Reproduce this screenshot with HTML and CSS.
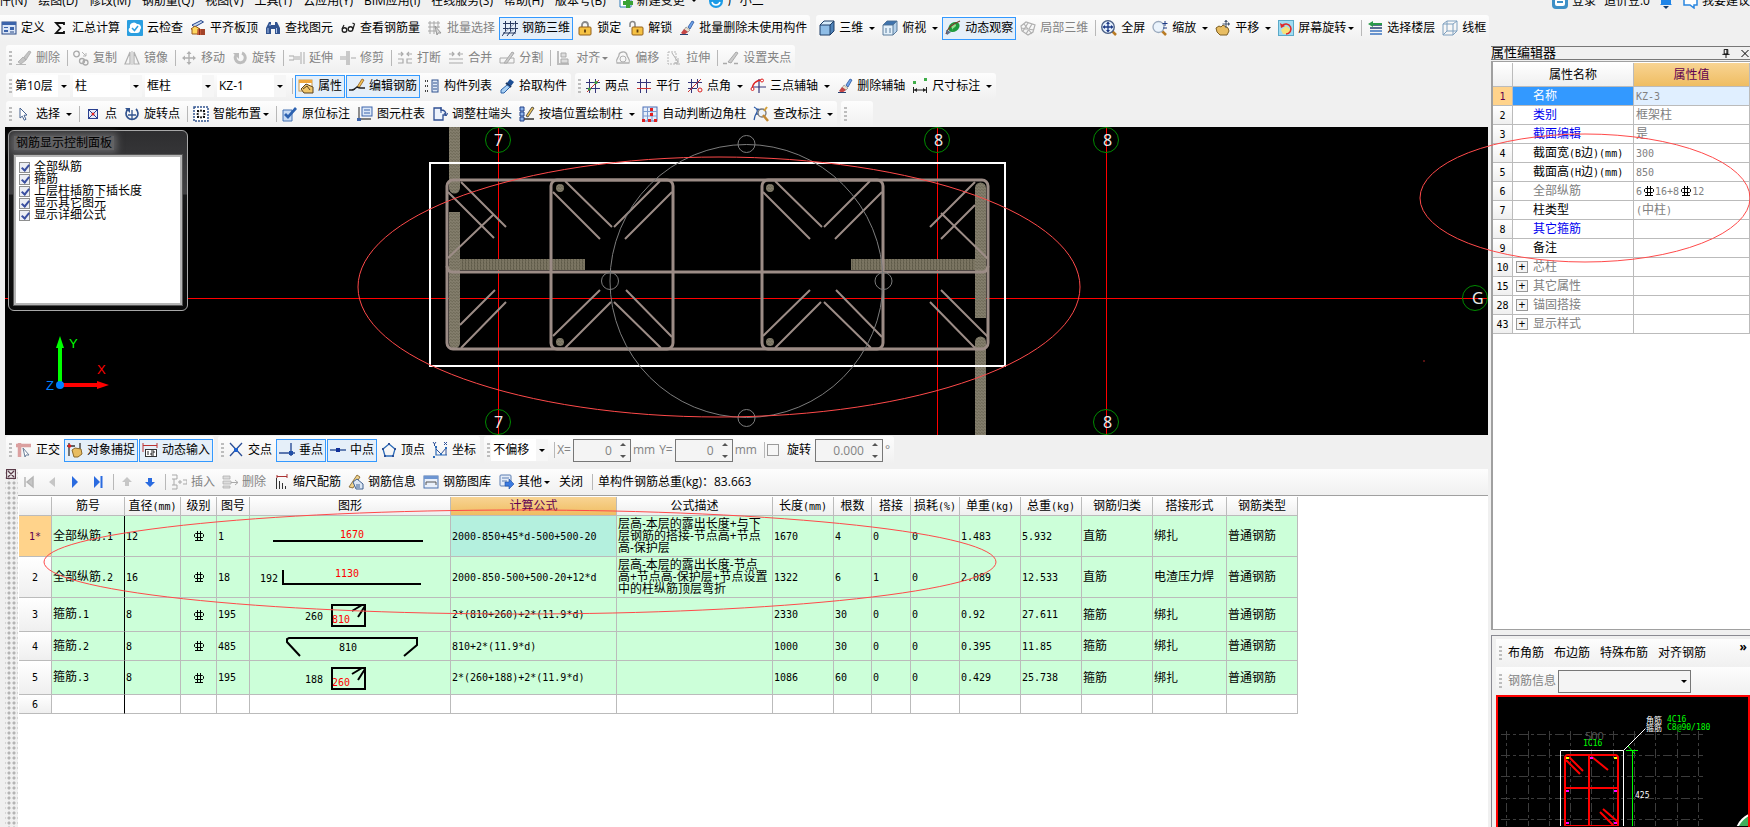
FILE: index.html
```html
<!DOCTYPE html>
<html lang="zh-CN">
<head>
  <meta charset="UTF-8">
  <meta name="viewport" content="width=device-width, initial-scale=1.0">
  <title>钢筋三维</title>
  <link rel="stylesheet" href="styles.css">
</head>
<body>
  <!-- icon sprite -->
  <svg class="sprite" aria-hidden="true">
    <symbol id="i-define" viewBox="0 0 16 16"><rect x="1" y="2" width="14" height="12" fill="#dbe6f7" stroke="#2a4a86"/><path d="M1 3.500h14" stroke="#3c64ab" stroke-width="3"/><path d="M3 7h4v1H3zM9 7h4v3H9zM3 10h4v2H3z" fill="#3c64ab"/><path d="M9 12h4" stroke="#2a4a86"/></symbol>
    <symbol id="i-sigma" viewBox="0 0 16 16"><path d="M12 5V3H4l4.500 5L4 13h8v-2" fill="none" stroke="#111" stroke-width="1.800"/></symbol>
    <symbol id="i-cloud" viewBox="0 0 16 16"><rect width="16" height="16" rx="1" fill="#2b9fe0"/><path d="M4 13a3 3 0 0 1-1-5.500A4 4 0 0 1 10 4a3.500 3.500 0 0 1 3 6 3 3 0 0 1-3 3z" fill="#fff"/><path d="M5 8l2.500 2.500L11 6" fill="none" stroke="#2b9fe0" stroke-width="1.500"/></symbol>
    <symbol id="i-board" viewBox="0 0 16 16"><path d="M2 5l9-4.500 2.500 1.500-9 5z" fill="#c8d8f0" stroke="#23438a"/><path d="M1 9l4-3 5 3-2 0v5H2V9z" fill="#ffd75e" stroke="#96591c"/><path d="M8 9h7v6H7z" fill="#c65a3a"/><path d="M9.500 9v6M12 9v6M14 9v6" stroke="#7f2d18"/></symbol>
    <symbol id="i-binoc" viewBox="0 0 16 16"><path d="M4 2h2v3h4V2h2l3 6v6h-5v-5H6v5H1V8z" fill="#31538f"/><path d="M3 8v5M11.500 8v5M5 4v2" stroke="#a9c2ea"/></symbol>
    <symbol id="i-glasses" viewBox="0 0 16 16"><circle cx="4.500" cy="10" r="2.300" fill="#fff" stroke="#222" stroke-width="1.400"/><circle cx="10.500" cy="9" r="2.300" fill="#fff" stroke="#222" stroke-width="1.400"/><path d="M13 9l1.500-5-2-1M2 9l2-4" fill="none" stroke="#222" stroke-width="1.200"/></symbol>
    <symbol id="i-grid" viewBox="0 0 16 16"><path d="M1 3h12M1 7h12M1 11h8M3 1v13M7 1v13M11 1v7" stroke="#a7a7a7"/><path d="M8 6l6 7-3 0-1 2z" fill="#d8d8d8" stroke="#999"/></symbol>
    <symbol id="i-grid3d" viewBox="0 0 16 16"><path d="M3.500 1v11M8.500 1v11M13.500 1v11M1 3.500h15M1 8.500h15M3 12L0 16M8 12l-3 4M13 12l-3 4M1 13h13" fill="none" stroke="#26385f"/><path d="M3 12L13 3M8 12l6-5" stroke="#6b7f9f" stroke-width=".8"/></symbol>
    <symbol id="i-lock" viewBox="0 0 16 16"><path d="M5 8V5a3 3 0 0 1 6 0v3" fill="none" stroke="#8a8a8a" stroke-width="1.800"/><rect x="2" y="7" width="12" height="8" rx="1" fill="#f6c244" stroke="#94611a"/><path d="M8 9.500v3" stroke="#5d3b0c" stroke-width="1.800"/></symbol>
    <symbol id="i-unlock" viewBox="0 0 16 16"><path d="M2 7V4a2.500 2.500 0 0 1 5 0v4" fill="none" stroke="#8a8a8a" stroke-width="1.600"/><rect x="4" y="7" width="11" height="8" rx="1" fill="#f6c244" stroke="#94611a"/><path d="M9.500 9.500v3" stroke="#5d3b0c" stroke-width="1.800"/></symbol>
    <symbol id="i-brush" viewBox="0 0 16 16"><path d="M9 7l4-6 2 1-4 7z" fill="#6fa3e8" stroke="#2d57a0" stroke-width=".8"/><path d="M7 7l4 3-2 2-4-2z" fill="#e9e2d0" stroke="#777" stroke-width=".6"/><path d="M5 9l4 3-4 3-3-2z" fill="#c44545"/><path d="M1 14.500h8" stroke="#28406f"/></symbol>
    <symbol id="i-cube" viewBox="0 0 16 16"><path d="M1 5l4-4h10l-4 4z" fill="#d7ecfb"/><path d="M1 5h10v10H1z" fill="#8fbde6"/><path d="M11 5l4-4v10l-4 4z" fill="#4e82b8"/><path d="M1 5h10v10H1zM1 5l4-4h10v10l-4 4M11 5l4-4" fill="none" stroke="#1f3f68"/></symbol>
    <symbol id="i-cubetop" viewBox="0 0 16 16"><path d="M1 5l4-4h10l-4 4z" fill="#3f73ad"/><path d="M1 5h10v10H1z" fill="#e3f0fa"/><path d="M11 5l4-4v10l-4 4z" fill="#b7d2ea"/><path d="M1 5h10v10H1zM1 5l4-4h10v10l-4 4M11 5l4-4M4 8v5M8 8v5" fill="none" stroke="#4d7093" stroke-width=".9"/></symbol>
    <symbol id="i-orbit" viewBox="0 0 16 16"><ellipse cx="9" cy="7" rx="6" ry="4.500" transform="rotate(-35 9 7)" fill="#1f9a3c"/><path d="M6 6c3-4 7-1 4 1s-3 3-2 4" fill="#8fe08d"/><path d="M1 14C3 7 8 4 15 1" fill="none" stroke="#7a3a2a" stroke-width="1.200"/><path d="M1 10l1 5 4-3" fill="#5b6f8a"/></symbol>
    <symbol id="i-local3d" viewBox="0 0 16 16"><path d="M1 6l5-4 9 3-2 7-5 3-6-4zM4 4l8 10M8 3l-5 8M12 4l-6 10M1 8l13 2" fill="none" stroke="#b0b0b0" stroke-width="1.200"/></symbol>
    <symbol id="i-zoomfit" viewBox="0 0 16 16"><path d="M11 11l4 4" stroke="#b97a22" stroke-width="2.500"/><circle cx="7" cy="7" r="6.300" fill="#e3eefb" stroke="#4a5f86" stroke-width="1.300"/><path d="M7 2.500v9M2.500 7h9" stroke="#1d3a86" stroke-width="1.300"/><path d="M7 1.500l2 2.500H5zM7 12.500l2-2.500H5zM1.500 7L4 5v4zM12.500 7L10 5v4z" fill="#1d3a86"/></symbol>
    <symbol id="i-zoom" viewBox="0 0 16 16"><path d="M10 11l4 4" stroke="#b97a22" stroke-width="2.500"/><circle cx="6.500" cy="7" r="5.500" fill="#eaf3fc" stroke="#9aa9bd" stroke-width="1.300"/><path d="M13 1v5M10.500 3.500h5M11 8h4" stroke="#1d3a86"/></symbol>
    <symbol id="i-pan" viewBox="0 0 16 16"><path d="M1 8l3-2 2 1 2-2 5 3 1 3-2 4H5l-3-3z" fill="#e8bd62" stroke="#7d5f24"/><path d="M11 0v8M7.500 4h7" stroke="#44556e"/><path d="M11 0l2 2H9zM15 4l-2-2v4z" fill="#44556e"/></symbol>
    <symbol id="i-rotscreen" viewBox="0 0 16 16"><rect x=".500" y=".500" width="15" height="15" fill="#9fdcf3" stroke="#5aa9c8"/><path d="M3 10l5-4 5 4-3 4H5z" fill="#f6e27a"/><path d="M4 6a5 5 0 1 1 4 8" fill="none" stroke="#e02828" stroke-width="1.600"/><path d="M2 3l1 5 4-2z" fill="#e02828"/></symbol>
    <symbol id="i-floors" viewBox="0 0 16 16"><path d="M5 5h10M3 8h12" stroke="#27406f" stroke-width="1.500"/><path d="M3 11h12M3 14h12" stroke="#3c74c0" stroke-width="1.500"/><path d="M1 4l5-3v2h9v2H6v2z" fill="#2b9a4a"/></symbol>
    <symbol id="i-wire" viewBox="0 0 16 16"><path d="M1 4h10v11H1zM1 4l4-3h10v10l-4 4M11 4l4-3M5 1v10h10M1 15l4-4" fill="none" stroke="#7fa0bf"/></symbol>

    <symbol id="i-gbrush" viewBox="0 0 16 16"><path d="M8 7l5-6 2 1-5 8zM7 7l3 3-5 4-3-2zM0 14.500h10" fill="#c4c4c4" stroke="#aaa" stroke-width=".8"/></symbol>
    <symbol id="i-copy" viewBox="0 0 16 16"><circle cx="3.500" cy="4" r="2.800" fill="none" stroke="#aaa" stroke-width="1.300"/><circle cx="9" cy="11" r="2.500" fill="none" stroke="#aaa" stroke-width="1.300"/><circle cx="12.500" cy="12.500" r="2.500" fill="none" stroke="#aaa" stroke-width="1.300"/><path d="M9 2l4 4M13 3v3h-3" fill="none" stroke="#b5b5b5"/></symbol>
    <symbol id="i-mirror" viewBox="0 0 16 16"><path d="M6 2v12H1zM10 2v12h5z" fill="none" stroke="#b0b0b0" stroke-width="1.200"/><path d="M8 1v14" stroke="#bbb"/></symbol>
    <symbol id="i-move" viewBox="0 0 16 16"><path d="M8 2v12M2 8h12" stroke="#b0b0b0" stroke-width="1.400"/><path d="M8 1l2.500 3h-5zM8 15l2.500-3h-5zM1 8l3-2.500v5zM15 8l-3-2.500v5z" fill="#b0b0b0"/></symbol>
    <symbol id="i-rotate" viewBox="0 0 16 16"><path d="M10 3a5 5 0 1 1-6 2" fill="none" stroke="#bdbdbd" stroke-width="3"/><path d="M1 3h6v6z" fill="#bdbdbd"/></symbol>
    <symbol id="i-extend" viewBox="0 0 16 16"><path d="M0 6h5v4H0M6 7h5M6 9h5M12 2v12M15 2v12" fill="none" stroke="#aaa"/></symbol>
    <symbol id="i-trim" viewBox="0 0 16 16"><path d="M0 7h6M0 9h6M7 1v14M9 1v14M11 8h5" fill="none" stroke="#aaa" stroke-width="1.200"/></symbol>
    <symbol id="i-break" viewBox="0 0 16 16"><path d="M1 4h5M10 4h5M4 2l2 2-2 2M12 2l-2 2 2 2M1 9h5v4H1M15 9h-5v4h5" fill="none" stroke="#aaa" stroke-width="1.200"/></symbol>
    <symbol id="i-merge" viewBox="0 0 16 16"><path d="M1 4h5M10 4h5M4 2l2 2-2 2M12 2l-2 2 2 2M1 9h14M1 13h14" fill="none" stroke="#aaa" stroke-width="1.200"/></symbol>
    <symbol id="i-split" viewBox="0 0 16 16"><path d="M1 8h14v5H1z" fill="none" stroke="#aaa"/><path d="M5 13l8-11 2 1-7 10z" fill="#ccc" stroke="#aaa"/></symbol>
    <symbol id="i-align" viewBox="0 0 16 16"><path d="M2 1v14M3 14h10" stroke="#aaa" stroke-width="1.500"/><path d="M5 3h5v4H5zM5 9h7v4H5z" fill="#ddd" stroke="#aaa"/></symbol>
    <symbol id="i-offset" viewBox="0 0 16 16"><path d="M2 13c-2-4 2-5 2-8s7-5 8 0c0 3 4 4 2 8z" fill="none" stroke="#b0b0b0" stroke-width="1.300"/><circle cx="8" cy="9" r="3" fill="none" stroke="#b0b0b0"/></symbol>
    <symbol id="i-stretch" viewBox="0 0 16 16"><path d="M2 2h8v12H2z" fill="none" stroke="#b5b5b5" stroke-dasharray="2 1"/><path d="M6 3l6 9M12 8v5H8M10 14h4" fill="none" stroke="#b0b0b0"/></symbol>
    <symbol id="i-gripset" viewBox="0 0 16 16"><path d="M0 13.500h4M11 13.500h4" stroke="#aaa" stroke-width="1.500"/><path d="M5 12l8-10 2 1-7 10z" fill="#ccc" stroke="#aaa"/></symbol>

    <symbol id="i-prop" viewBox="0 0 16 16"><rect x="1" y="2" width="13" height="11" fill="#fff" stroke="#c99a4c"/><path d="M1 3.500h13" stroke="#f0a73a" stroke-width="3"/><path d="M3 11l5-5 7 3v6H6z" fill="#f0c66b" stroke="#5b4320"/><path d="M5 11l4-3 3 4" fill="none" stroke="#5b4320"/></symbol>
    <symbol id="i-editbar" viewBox="0 0 16 16"><path d="M8 9l5-8 2 1-5 8z" fill="#f5c556" stroke="#8d5a20" stroke-width=".8"/><path d="M0 12h4l4-3 3 1h5M3 12l3-1" fill="none" stroke="#222" stroke-width="1.400"/></symbol>
    <symbol id="i-list" viewBox="0 0 16 16"><path d="M1 3h4M1 8h4M1 13h4" stroke="#444" stroke-width="2" stroke-dasharray="1 1"/><rect x="8" y="2" width="6" height="12" fill="#dfe9f7" stroke="#31538f"/><path d="M9 5h4M9 8h4M9 11h4" stroke="#31538f"/></symbol>
    <symbol id="i-pick" viewBox="0 0 16 16"><path d="M8 5l3-4 4 3-3 4z" fill="#1c4e95"/><path d="M7 5l5 4" stroke="#16335f" stroke-width="2"/><path d="M8 7l3 2-6 6-3 0 0-3z" fill="#a8d0f4" stroke="#2c62a8"/></symbol>
    <symbol id="i-twopt" viewBox="0 0 16 16"><path d="M4.500 1v14M10.500 1v14M1 4.500h14M1 10.500h14" stroke="#35357a"/><path d="M2 14L14 2" stroke="#c33"/><circle cx="4.500" cy="11" r="1.600" fill="#3a9b3a"/><circle cx="11" cy="4.500" r="1.600" fill="#3a9b3a"/></symbol>
    <symbol id="i-parallel" viewBox="0 0 16 16"><path d="M4.500 1v14M10.500 1v14M1 4.500h14" stroke="#35357a"/><path d="M1 10.500h14" stroke="#c33"/></symbol>
    <symbol id="i-angle" viewBox="0 0 16 16"><path d="M4.500 1v14M10.500 1v9M1 4.500h14M1 10.500h9" stroke="#35357a"/><path d="M1 14L14 1" stroke="#c33"/><circle cx="13" cy="12" r="2" fill="none" stroke="#d22"/></symbol>
    <symbol id="i-threept" viewBox="0 0 16 16"><path d="M9 1v14M3 9h13" stroke="#35357a" stroke-width="1.200"/><path d="M2 12c0-6 4-10 10-10" fill="none" stroke="#d22" stroke-width="1.300"/><circle cx="2.500" cy="11" r="1.500" fill="#fff" stroke="#d22"/><circle cx="12" cy="2.500" r="1.500" fill="#fff" stroke="#d22"/></symbol>
    <symbol id="i-dim" viewBox="0 0 16 16"><path d="M1 3h3v3H1zM12 0h3v3h-3z" fill="#3fae49"/><path d="M1.500 9v6M14.500 9v6M2 12h12" stroke="#222"/><path d="M2 12l3-2v4zM14 12l-3-2v4z" fill="#222"/></symbol>

    <symbol id="i-select" viewBox="0 0 16 16"><path d="M4 2l7 7-3 .300 2 4-1.700.900-2-4L4 12z" fill="#fff" stroke="#44618f"/></symbol>
    <symbol id="i-point" viewBox="0 0 16 16"><rect x="3.500" y="3.500" width="9" height="9" fill="#e6ecf8" stroke="#2a3f8f"/><path d="M4 4l8 8M12 4l-8 8" stroke="#2a3f8f"/><circle cx="8" cy="8" r="1.500" fill="#d22"/></symbol>
    <symbol id="i-rotpt" viewBox="0 0 16 16"><path d="M4 3a6 6 0 1 0 8 0" fill="none" stroke="#31538f" stroke-width="1.700"/><path d="M1 2h5v5z" fill="#31538f"/><path d="M8 4v9M4 9h8" stroke="#31538f" stroke-width="1.300"/></symbol>
    <symbol id="i-smart" viewBox="0 0 16 16"><rect x="1" y="1" width="14" height="14" fill="#fff" stroke="#31538f" stroke-width="1.500" stroke-dasharray="2 1"/><path d="M8 3l1.500 2.500h-3zM8 13l1.500-2.500h-3zM3 8l2.500-1.500v3zM13 8l-2.500-1.500v3zM4 4h2v2H4zM10 4h2v2h-2zM4 10h2v2H4zM10 10h2v2h-2z" fill="#111"/></symbol>
    <symbol id="i-origin" viewBox="0 0 16 16"><path d="M1 4h9v11H1z" fill="#c7dbf5" stroke="#4370b3"/><path d="M2 9l4 4L15 3l-2-2-7 8-2-2z" fill="#2d62b0"/></symbol>
    <symbol id="i-coltable" viewBox="0 0 16 16"><path d="M2 1v12h12" fill="none" stroke="#555" stroke-width="1.300"/><rect x="5" y="1" width="10" height="9" fill="#dce8f8" stroke="#3c64ab"/><path d="M7 4h6M7 7h6" stroke="#3c64ab"/><path d="M0 12h4v3H0z" fill="#3c64ab"/></symbol>
    <symbol id="i-adjust" viewBox="0 0 16 16"><path d="M2 2h7v2c4 0 5 2 5 5h-3v5H2z" fill="#edf3fc" stroke="#2f4f93" stroke-width="1.300"/><path d="M9 1v6M12 7l2 3 2-3" fill="none" stroke="#2f4f93"/></symbol>
    <symbol id="i-wall" viewBox="0 0 16 16"><path d="M1 1h4v4H1zM1 6h4v4H1zM1 11h4v4H1z" fill="#8fb4ea" stroke="#23438a"/><path d="M5 13h10" stroke="#333" stroke-width="1.500"/><path d="M7 10l6-9 2 1-6 9z" fill="#f3c75b" stroke="#333" stroke-width=".8"/></symbol>
    <symbol id="i-auto" viewBox="0 0 16 16"><rect x="1" y="1" width="14" height="14" fill="#e8effa" stroke="#4a6fb5"/><path d="M1 5.500h14M1 10h14M5.500 1v14M10 1v14" stroke="#7c9bd0"/><path d="M8 2h3v3H8zM8 7h3v3H8zM0 13h3v3H0zM6 13h3v3H6zM12 13h3v3h-3z" fill="#e01f1f"/></symbol>
    <symbol id="i-query" viewBox="0 0 16 16"><path d="M1 1c4 2 4 4 2 7s-1 4-2 6M3 3l6 1M3 8h3" fill="none" stroke="#2c5aa5" stroke-width="1.300"/><circle cx="9" cy="7" r="4" fill="#eef4fb" stroke="#777" stroke-width="1.300"/><path d="M10 9l5 6" stroke="#c38a35" stroke-width="2.500"/><path d="M11 5l3-4" stroke="#d4a13b" stroke-width="2"/></symbol>

    <symbol id="i-ortho" viewBox="0 0 16 16"><path d="M0 3.500h15M3.500 1v14" stroke="#dba0a0" stroke-width="3.500"/><path d="M7 6l6 7-3 0-1 2z" fill="#fff" stroke="#6b7f99"/></symbol>
    <symbol id="i-osnap" viewBox="0 0 16 16"><path d="M2 1v13M0 4h8M13 1v6" stroke="#333" stroke-width="1.300"/><circle cx="2.500" cy="4" r="1.800" fill="#d22"/><path d="M5 8l3-2 6 1 1 5-4 3H7z" fill="#e8bd62" stroke="#8b6a2c"/></symbol>
    <symbol id="i-dyn" viewBox="0 0 16 16"><path d="M1 1v9M15 1v5M1 3.500h14" stroke="#b33" fill="none"/><rect x="3.500" y="7.500" width="11" height="7" fill="#fff" stroke="#333"/><path d="M6 9v4M9 9h3v2H9v2h3" fill="none" stroke="#222"/></symbol>
    <symbol id="i-cross" viewBox="0 0 16 16"><path d="M2 1l12 13M14 1L2 14" stroke="#2c4f96" stroke-width="1.300"/><rect x="6" y="6" width="4" height="4" fill="#1f62d0"/></symbol>
    <symbol id="i-perp" viewBox="0 0 16 16"><path d="M0 11h16M12 1v13" stroke="#2c4f96" stroke-width="1.400"/><rect x="10" y="9" width="4" height="4" fill="#1f4fa8"/></symbol>
    <symbol id="i-mid" viewBox="0 0 16 16"><path d="M0 8h16" stroke="#2c4f96" stroke-width="1.400"/><rect x="6" y="6" width="4" height="4" fill="#12309a"/></symbol>
    <symbol id="i-vertex" viewBox="0 0 16 16"><path d="M8 2l6 5-2 7H4L2 7z" fill="none" stroke="#2c6bb8" stroke-width="1.300"/><path d="M7 1h2v2H7zM1 6h2v2H1zM13 6h2v2h-2zM3 13h2v2H3zM11 13h2v2h-2z" fill="#2c4f96"/></symbol>
    <symbol id="i-coord" viewBox="0 0 16 16"><path d="M4 5v8h11" fill="none" stroke="#2c6bb8" stroke-width="1.200"/><path d="M1 0l1.500 2L4 0M2.500 2v2M12 0l3 3M15 0l-3 3M4 7l5 5 5-6v7" fill="none" stroke="#2c4f96"/><path d="M3 4h2v2H3zM8 11h2v2H8zM13 5h2v2h-2zM1 14h2v2H1z" fill="#2c6bb8"/></symbol>

    <symbol id="i-first" viewBox="0 0 16 16"><path d="M4 3v10M6 8l6-5v10z" fill="#c6c6c6" stroke="#b5b5b5" stroke-width="1.500"/></symbol>
    <symbol id="i-prev" viewBox="0 0 16 16"><path d="M5 8l6-5v10z" fill="#c6c6c6"/></symbol>
    <symbol id="i-next" viewBox="0 0 16 16"><path d="M5 2l6 6-6 6z" fill="#2a6be0"/></symbol>
    <symbol id="i-last" viewBox="0 0 16 16"><path d="M4 2l6 6-6 6z" fill="#2a6be0"/><path d="M11.500 2v12" stroke="#2a6be0" stroke-width="2"/></symbol>
    <symbol id="i-up" viewBox="0 0 16 16"><path d="M8 3l5 5h-3v4H6V8H3z" fill="#c6c6c6"/></symbol>
    <symbol id="i-down" viewBox="0 0 16 16"><path d="M8 13l5-5h-3V4H6v4H3z" fill="#2a6be0"/></symbol>
    <symbol id="i-insert" viewBox="0 0 16 16"><path d="M1 1h5v4H1M1 11h5v4H1M3 5v6M7 8h4M9 6v4M12 6h4v4h-4" fill="none" stroke="#a9a9a9"/></symbol>
    <symbol id="i-delrow" viewBox="0 0 16 16"><path d="M1 2h7v3H1zM1 7h8v3H1zM1 12h7v2H1z" fill="#ddd" stroke="#b0b0b0" stroke-width=".8"/><path d="M9 8.500h7M13 6l3 2.500-3 2.500" fill="none" stroke="#a9a9a9"/></symbol>
    <symbol id="i-scale" viewBox="0 0 16 16"><path d="M4 1v3M14 0v4M4 2.500h10" stroke="#a33"/><path d="M3.500 4v11M6.500 7v8M9.500 9v6M12.500 12v3" stroke="#333"/></symbol>
    <symbol id="i-info" viewBox="0 0 16 16"><path d="M1 13L9 1l3 2-7 11z" fill="#f0d28a" stroke="#7a5b24" stroke-width=".8"/><path d="M5 8l4-3 6 5v5H8z" fill="#dce7f5" stroke="#3f618f"/><path d="M9 10v4M11 10v4" stroke="#3f618f"/></symbol>
    <symbol id="i-lib" viewBox="0 0 16 16"><rect x="1" y="2" width="14" height="12" fill="#e9f0fa" stroke="#4b73ae"/><path d="M1 3.500h14" stroke="#6d95d1" stroke-width="3"/><path d="M3 11V8h10v3" fill="none" stroke="#555"/></symbol>
    <symbol id="i-other" viewBox="0 0 16 16"><rect x="2" y="1" width="11" height="11" rx="1" fill="#e4ecf8" stroke="#5c7fb2"/><path d="M4 4h7M4 7h5" stroke="#5c7fb2"/><path d="M7 8h4V5l5 5-5 5v-3H7z" fill="#3b7ae0" stroke="#1d4da0" stroke-width=".6"/></symbol>

    <symbol id="i-new" viewBox="0 0 16 16"><path d="M3 1h8l3 3v10H3z" fill="#fff" stroke="#2f7bb8"/><path d="M11 5v10M6 10h10" stroke="#3aa335" stroke-width="4"/></symbol>
    <symbol id="i-face" viewBox="0 0 16 16"><circle cx="8" cy="8" r="7" fill="#1c9be6"/><path d="M4 9c1 4 7 4 8 0" fill="none" stroke="#fff" stroke-width="1.500"/></symbol>
    <symbol id="i-user" viewBox="0 0 16 16"><rect width="16" height="16" rx="4" fill="#3d8fc6"/><rect x="3" y="6" width="10" height="7" rx="2" fill="#fff"/><path d="M5 9h6" stroke="#3d8fc6" stroke-width="2"/></symbol>
    <symbol id="i-bell" viewBox="0 0 16 16"><path d="M3 11V6a5 5 0 0 1 10 0v5l1 1H2z" fill="#1e84e8"/><path d="M5 13h6l-3 3z" fill="#123a6b"/></symbol>
    <symbol id="i-chat" viewBox="0 0 16 16"><path d="M2 2h13v10h-3v3l-4-3H2z" fill="#fff" stroke="#2a86e0" stroke-width="1.500"/></symbol>
    <!-- HRB grade mark -->
    <symbol id="i-grade" viewBox="0 0 10 10"><path d="M.500 3.500l1-1h7l1 1v2l-1 1h-7l-1-1zM3.500 0v9M6.500 0v9M1 9.500h8" fill="none" stroke="currentColor"/></symbol>
  </svg>

  <header>
    <nav class="menubar">
      <a href="#">文件(N)</a><a href="#">绘图(D)</a><a href="#">修改(M)</a><a href="#">钢筋量(Q)</a><a href="#">视图(V)</a><a href="#">工具(T)</a><a href="#">云应用(Y)</a><a href="#">BIM应用(I)</a><a href="#">在线服务(S)</a><a href="#">帮助(H)</a><a href="#">版本号(B)</a>
      <a href="#"><svg><use href="#i-new"/></svg>新建变更<i class="arrow"></i></a>
      <a href="#"><svg><use href="#i-face"/></svg>广小二</a>
      <div class="account">
        <a href="#"><svg><use href="#i-user"/></svg>登录</a>
        <a href="#">造价豆:0</a>
        <a href="#" aria-label="通知"><svg><use href="#i-bell"/></svg></a>
        <a href="#"><svg><use href="#i-chat"/></svg>我要建议</a>
      </div>
    </nav>
    <div class="row row-main">
      <div class="band">
        <button><svg><use href="#i-define"/></svg>定义</button>
        <button><svg><use href="#i-sigma"/></svg>汇总计算</button>
        <button><svg><use href="#i-cloud"/></svg>云检查</button>
        <button><svg><use href="#i-board"/></svg>平齐板顶</button>
        <button><svg><use href="#i-binoc"/></svg>查找图元</button>
        <button><svg><use href="#i-glasses"/></svg>查看钢筋量</button>
        <button disabled><svg><use href="#i-grid"/></svg>批量选择</button>
        <button class="on"><svg><use href="#i-grid3d"/></svg>钢筋三维</button>
        <button><svg><use href="#i-lock"/></svg>锁定</button>
        <button><svg><use href="#i-unlock"/></svg>解锁</button>
        <button><svg><use href="#i-brush"/></svg>批量删除未使用构件</button>
      </div>
      <div class="band">
        <button><svg><use href="#i-cube"/></svg>三维<i class="arrow"></i></button>
        <button><svg><use href="#i-cubetop"/></svg>俯视<i class="arrow"></i></button>
        <button class="on"><svg><use href="#i-orbit"/></svg>动态观察</button>
        <button disabled><svg><use href="#i-local3d"/></svg>局部三维</button>
        <span class="sep"></span>
        <button><svg><use href="#i-zoomfit"/></svg>全屏</button>
        <button><svg><use href="#i-zoom"/></svg>缩放<i class="arrow"></i></button>
        <button><svg><use href="#i-pan"/></svg>平移<i class="arrow"></i></button>
        <button><svg><use href="#i-rotscreen"/></svg>屏幕旋转<i class="arrow tight"></i></button>
        <span class="sep"></span>
        <button><svg><use href="#i-floors"/></svg>选择楼层</button>
        <button><svg><use href="#i-wire"/></svg>线框</button>
      </div>
    </div>
  </header>

  <main>
    <section class="work">
      <div class="row">
        <div class="band">
          <span class="grip"></span>
          <button disabled><svg><use href="#i-gbrush"/></svg>删除</button>
          <span class="sep"></span>
          <button disabled><svg><use href="#i-copy"/></svg>复制</button>
          <button disabled><svg><use href="#i-mirror"/></svg>镜像</button>
          <span class="sep"></span>
          <button disabled><svg><use href="#i-move"/></svg>移动</button>
          <button disabled><svg><use href="#i-rotate"/></svg>旋转</button>
          <span class="sep"></span>
          <button disabled><svg><use href="#i-extend"/></svg>延伸</button>
          <button disabled><svg><use href="#i-trim"/></svg>修剪</button>
          <span class="sep"></span>
          <button disabled><svg><use href="#i-break"/></svg>打断</button>
          <button disabled><svg><use href="#i-merge"/></svg>合并</button>
          <button disabled><svg><use href="#i-split"/></svg>分割</button>
          <span class="sep"></span>
          <button disabled><svg><use href="#i-align"/></svg>对齐<i class="arrow tight"></i></button>
          <button disabled><svg><use href="#i-offset"/></svg>偏移</button>
          <button disabled><svg><use href="#i-stretch"/></svg>拉伸</button>
          <span class="sep"></span>
          <button disabled><svg><use href="#i-gripset"/></svg>设置夹点</button>
        </div>
      </div>

      <div class="row">
        <div class="band">
          <span class="grip"></span>
          <span class="combo short"><select aria-label="楼层"><option>第10层</option></select></span>
          <span class="combo"><select aria-label="构件类型"><option>柱</option></select></span>
          <span class="combo"><select aria-label="构件子类"><option>框柱</option></select></span>
          <span class="combo"><select aria-label="构件"><option>KZ-1</option></select></span>
          <span class="sep"></span>
          <button class="on"><svg><use href="#i-prop"/></svg>属性</button>
          <button class="on"><svg><use href="#i-editbar"/></svg>编辑钢筋</button>
          <button><svg><use href="#i-list"/></svg>构件列表</button>
          <button><svg><use href="#i-pick"/></svg>拾取构件</button>
        </div>
        <div class="band">
          <span class="grip"></span>
          <button><svg><use href="#i-twopt"/></svg>两点</button>
          <button><svg><use href="#i-parallel"/></svg>平行</button>
          <button><svg><use href="#i-angle"/></svg>点角<i class="arrow"></i></button>
          <button><svg><use href="#i-threept"/></svg>三点辅轴<i class="arrow"></i></button>
          <button><svg><use href="#i-brush"/></svg>删除辅轴</button>
          <button><svg><use href="#i-dim"/></svg>尺寸标注<i class="arrow"></i></button>
        </div>
      </div>

      <div class="row">
        <div class="band">
          <span class="grip"></span>
          <button><svg><use href="#i-select"/></svg>选择<i class="arrow"></i></button>
          <span class="sep"></span>
          <button><svg><use href="#i-point"/></svg>点</button>
          <button><svg><use href="#i-rotpt"/></svg>旋转点</button>
          <span class="sep"></span>
          <button><svg><use href="#i-smart"/></svg>智能布置<i class="arrow tight"></i></button>
          <span class="sep"></span>
          <button><svg><use href="#i-origin"/></svg>原位标注</button>
          <button><svg><use href="#i-coltable"/></svg>图元柱表</button>
          <button><svg><use href="#i-adjust"/></svg>调整柱端头</button>
          <button><svg><use href="#i-wall"/></svg>按墙位置绘制柱<i class="arrow"></i></button>
          <button><svg><use href="#i-auto"/></svg>自动判断边角柱</button>
          <button><svg><use href="#i-query"/></svg>查改标注<i class="arrow"></i></button>
        </div>
        <div class="band blank"><span class="grip"></span></div>
      </div>

      <div class="canvas">
        <svg class="scene" viewBox="5 127 1483 308">
          <defs>
            <pattern id="rib" width="3" height="3" patternUnits="userSpaceOnUse"><rect width="3" height="3" fill="#837d6c"/><path d="M0 0l3 2" stroke="#6d6856"/></pattern>
            <pattern id="ribv" width="3" height="3" patternUnits="userSpaceOnUse"><rect width="3" height="3" fill="#7b7562"/><path d="M0 0l1 3" stroke="#5d5947"/></pattern>
          </defs>
          <g class="axis">
            <path d="M5 298.500h1483M498.500 127v308M937.500 127v308M1106.500 127v308"/>
          </g>
          <g class="bubble">
            <circle cx="498" cy="140" r="12.500"/><circle cx="937" cy="140" r="12.500"/><circle cx="1106" cy="140" r="12.500"/>
            <circle cx="498" cy="422" r="12.500"/><circle cx="1106" cy="422" r="12.500"/><circle cx="1475" cy="298" r="12.500"/>
          </g>
          <g class="axis-no">
            <text x="494" y="146">7</text><text x="934" y="146">8</text><text x="1103" y="146">8</text>
            <text x="494" y="428">7</text><text x="1103" y="428">8</text><text x="1472" y="304">G</text>
          </g>
          <g fill="url(#rib)">
            <path d="M449 127h11v61a5 5 0 0 1-11 0zM449 212h11v131a5 5 0 0 1-11 0zM975 188a5 5 0 0 1 11 0v130h-11zM975 342a5 5 0 0 1 11 0v93h-11z"/>
            <path d="M460 259h125v11H460zM851 259h124v11H851z" fill="url(#ribv)"/>
            <circle cx="560" cy="188" r="4"/><circle cx="560" cy="342" r="4"/><circle cx="770" cy="188" r="4"/><circle cx="770" cy="342" r="4"/>
          </g>
          <rect x="430" y="163" width="575" height="203" fill="none" stroke="#fff" stroke-width="2"/>
          <g class="stirrup">
            <rect x="447" y="180" width="541" height="169" rx="6"/>
            <path d="M447 266q1 6 5 6h531q4 0 5-6"/>
            <rect x="551" y="180" width="122" height="169" rx="6"/>
            <rect x="762" y="180" width="121" height="169" rx="6"/>
          </g>
          <g class="hook">
            <path d="M461 182l45 45M448 192l46 46M493 215l-45 43M495 290l-35 35M506 302l-45 46"/>
            <path d="M975 182l-45 45M975 205l-34 34M941 213l47 46M941 290l47 47M930 302l45 46"/>
            <path id="hooks" d="M565 181l47 46M553 192l47 47M660 181l-46 46M672 192l-47 47M553 336l47-46M565 348l46-46M626 290l46 47M614 302l47 46"/>
            <use href="#hooks" x="210"/>
          </g>
          <g class="orbit">
            <circle cx="746.500" cy="281" r="136.500"/>
            <circle cx="746.500" cy="144" r="8.500"/><circle cx="746.500" cy="418" r="8.500"/><circle cx="610" cy="281" r="8.500"/><circle cx="883.500" cy="281" r="8.500"/>
          </g>
          <path d="M58 385v-37h-2l4-12 4 12h-2v37z" fill="#0f0"/>
          <path d="M60 383h37v-2l12 4-12 4v-2H60z" fill="#f00"/>
          <circle cx="60" cy="385" r="4" fill="#0080ff"/>
          <g class="ucs">
            <text x="69" y="348" fill="#0f0">Y</text><text x="97" y="374" fill="#f00">X</text><text x="46" y="390" fill="#0080ff">Z</text>
          </g>
          <path d="M1423 361h2" stroke="#a22"/>
          <ellipse class="mark" cx="719" cy="287" rx="361" ry="130"/>
        </svg>
        <div class="float-panel">
          <h2>钢筋显示控制面板</h2>
          <div class="checks">
            <label><input type="checkbox" checked>全部纵筋</label>
            <label><input type="checkbox" checked>箍筋</label>
            <label><input type="checkbox" checked>上层柱插筋下插长度</label>
            <label><input type="checkbox" checked>显示其它图元</label>
            <label><input type="checkbox" checked>显示详细公式</label>
          </div>
        </div>
      </div>

      <div class="row row-snap">
        <div class="band">
          <span class="grip"></span>
          <button><svg><use href="#i-ortho"/></svg>正交</button>
          <button class="on"><svg><use href="#i-osnap"/></svg>对象捕捉</button>
          <button class="on"><svg><use href="#i-dyn"/></svg>动态输入</button>
        </div>
        <div class="band">
          <span class="grip"></span>
          <button><svg><use href="#i-cross"/></svg>交点</button>
          <button class="on"><svg><use href="#i-perp"/></svg>垂点</button>
          <button class="on"><svg><use href="#i-mid"/></svg>中点</button>
          <button><svg><use href="#i-vertex"/></svg>顶点</button>
          <button><svg><use href="#i-coord"/></svg>坐标</button>
        </div>
        <div class="band">
          <span class="grip"></span>
          <span class="combo short"><select aria-label="偏移方式"><option>不偏移</option></select></span>
          <span class="sep"></span>
          <label class="field">X=<span class="spin"><input type="text" value="0"></span>mm</label>
          <label class="field">Y=<span class="spin"><input type="text" value="0"></span>mm</label>
          <span class="sep"></span>
          <label class="rotate-check"><input type="checkbox">旋转</label>
          <span class="field"><span class="spin wide"><input type="text" value="0.000" aria-label="旋转角度"></span>°</span>
        </div>
      </div>

      <div class="dock">
        <div class="dock-handle"><button aria-label="关闭面板"><svg viewBox="0 0 10 10"><path d="M.500.500h9v9h-9zM2 2l6 6M8 2L2 8" fill="none" stroke="#5a3a48" stroke-width="1.300"/></svg></button></div>
        <div class="dock-body">
          <div class="band dock-bar">
            <button class="nav" disabled aria-label="首条"><svg><use href="#i-first"/></svg></button>
            <button class="nav" disabled aria-label="上一条"><svg><use href="#i-prev"/></svg></button>
            <button class="nav" aria-label="下一条"><svg><use href="#i-next"/></svg></button>
            <button class="nav" aria-label="末条"><svg><use href="#i-last"/></svg></button>
            <span class="sep"></span>
            <button class="nav" disabled aria-label="上移"><svg><use href="#i-up"/></svg></button>
            <button class="nav" aria-label="下移"><svg><use href="#i-down"/></svg></button>
            <span class="sep"></span>
            <button disabled><svg><use href="#i-insert"/></svg>插入</button>
            <button disabled><svg><use href="#i-delrow"/></svg>删除</button>
            <button><svg><use href="#i-scale"/></svg>缩尺配筋</button>
            <button><svg><use href="#i-info"/></svg>钢筋信息</button>
            <button><svg><use href="#i-lib"/></svg>钢筋图库</button>
            <button><svg><use href="#i-other"/></svg>其他<i class="arrow tight"></i></button>
            <button class="close">关闭</button>
            <span class="sep"></span>
            <span class="total">单构件钢筋总重(kg)：83.663</span>
          </div>
          <div class="sheet">
            <table class="rebar">
              <colgroup><col><col><col><col><col><col><col><col><col><col><col><col><col><col><col><col><col></colgroup>
              <thead>
                <tr><th></th><th>筋号</th><th>直径<b>(mm)</b></th><th>级别</th><th>图号</th><th>图形</th><th class="cur">计算公式</th><th>公式描述</th><th>长度<b>(mm)</b></th><th>根数</th><th>搭接</th><th>损耗<b>(%)</b></th><th>单重<b>(kg)</b></th><th>总重<b>(kg)</b></th><th>钢筋归类</th><th>搭接形式</th><th>钢筋类型</th></tr>
              </thead>
              <tbody>
                <tr class="tall">
                  <th class="cur"><b>1*</b></th><td>全部纵筋<b>.1</b></td><td><b>12</b></td><td class="grade"><svg><use href="#i-grade"/></svg></td><td><b>1</b></td>
                  <td class="shape"><svg viewBox="0 0 200 40"><path d="M23 25h150"/><text class="red" x="90" y="22">1670</text></svg></td>
                  <td class="focus"><b>2000-850+45*d-500+500-20</b></td><td class="desc">层高-本层的露出长度+与下<br>层钢筋的搭接-节点高+节点<br>高-保护层</td>
                  <td><b>1670</b></td><td><b>4</b></td><td><b>0</b></td><td><b>0</b></td><td><b>1.483</b></td><td><b>5.932</b></td><td>直筋</td><td>绑扎</td><td>普通钢筋</td>
                </tr>
                <tr class="tall">
                  <th><b>2</b></th><td>全部纵筋<b>.2</b></td><td><b>16</b></td><td class="grade"><svg><use href="#i-grade"/></svg></td><td><b>18</b></td>
                  <td class="shape"><svg viewBox="0 0 200 40"><path d="M33 13v14h138"/><text x="10" y="25">192</text><text class="red" x="85" y="20">1130</text></svg></td>
                  <td><b>2000-850-500+500-20+12*d</b></td><td class="desc">层高-本层的露出长度-节点<br>高+节点高-保护层+节点设置<br>中的柱纵筋顶层弯折</td>
                  <td><b>1322</b></td><td><b>6</b></td><td><b>1</b></td><td><b>0</b></td><td><b>2.089</b></td><td><b>12.533</b></td><td>直筋</td><td>电渣压力焊</td><td>普通钢筋</td>
                </tr>
                <tr class="mid">
                  <th><b>3</b></th><td>箍筋<b>.1</b></td><td><b>8</b></td><td class="grade"><svg><use href="#i-grade"/></svg></td><td><b>195</b></td>
                  <td class="shape"><svg viewBox="0 0 200 33"><path d="M82 7h33v21H82zM102 13l10-6M108 19l7-11"/><text x="55" y="22">260</text><text class="red" x="82" y="25">810</text></svg></td>
                  <td><b>2*(810+260)+2*(11.9*d)</b></td><td></td>
                  <td><b>2330</b></td><td><b>30</b></td><td><b>0</b></td><td><b>0</b></td><td><b>0.92</b></td><td><b>27.611</b></td><td>箍筋</td><td>绑扎</td><td>普通钢筋</td>
                </tr>
                <tr class="low">
                  <th><b>4</b></th><td>箍筋<b>.2</b></td><td><b>8</b></td><td class="grade"><svg><use href="#i-grade"/></svg></td><td><b>485</b></td>
                  <td class="shape"><svg viewBox="0 0 200 28"><path d="M50 24L37 10V7l2-1h128v7l-13 11"/><text x="89" y="19">810</text></svg></td>
                  <td><b>810+2*(11.9*d)</b></td><td></td>
                  <td><b>1000</b></td><td><b>30</b></td><td><b>0</b></td><td><b>0</b></td><td><b>0.395</b></td><td><b>11.85</b></td><td>箍筋</td><td>绑扎</td><td>普通钢筋</td>
                </tr>
                <tr class="mid">
                  <th><b>5</b></th><td>箍筋<b>.3</b></td><td><b>8</b></td><td class="grade"><svg><use href="#i-grade"/></svg></td><td><b>195</b></td>
                  <td class="shape"><svg viewBox="0 0 200 33"><path d="M82 7h33v21H82zM102 13l10-6M108 19l7-11"/><text x="55" y="22">188</text><text class="red" x="82" y="25">260</text></svg></td>
                  <td><b>2*(260+188)+2*(11.9*d)</b></td><td></td>
                  <td><b>1086</b></td><td><b>60</b></td><td><b>0</b></td><td><b>0</b></td><td><b>0.429</b></td><td><b>25.738</b></td><td>箍筋</td><td>绑扎</td><td>普通钢筋</td>
                </tr>
                <tr class="empty">
                  <th><b>6</b></th><td></td><td></td><td></td><td></td><td></td><td></td><td></td><td></td><td></td><td></td><td></td><td></td><td></td><td></td><td></td><td></td>
                </tr>
              </tbody>
            </table>
            <svg class="mark-table" viewBox="0 0 954 106"><ellipse class="mark" cx="477" cy="53" rx="476" ry="52"/></svg>
          </div>
        </div>
      </div>
    </section>

    <aside>
      <div class="prop-title">
        <h2>属性编辑器</h2>
        <button aria-label="固定"><svg viewBox="0 0 8 10"><path d="M2 .500h4v5H2zM5 .500v5M0 6h8M4 6v4" fill="none" stroke="#000"/></svg></button>
        <button aria-label="关闭"><svg viewBox="0 0 8 8"><path d="M.500.500l7 7M7.500.500l-7 7" stroke="#000"/></svg></button>
      </div>
      <div class="prop-box">
        <table class="props">
          <thead><tr><th></th><th>属性名称</th><th class="cur">属性值</th></tr></thead>
          <tbody>
            <tr class="sel"><th><b>1</b></th><td>名称</td><td><b>KZ-3</b></td></tr>
            <tr class="blue"><th><b>2</b></th><td>类别</td><td>框架柱</td></tr>
            <tr class="blue"><th><b>3</b></th><td>截面编辑</td><td>是</td></tr>
            <tr><th><b>4</b></th><td>截面宽<b>(B</b>边<b>)(mm)</b></td><td><b>300</b></td></tr>
            <tr><th><b>5</b></th><td>截面高<b>(H</b>边<b>)(mm)</b></td><td><b>850</b></td></tr>
            <tr class="dim"><th><b>6</b></th><td>全部纵筋</td><td><b>6</b><svg><use href="#i-grade"/></svg><b>16+8</b><svg><use href="#i-grade"/></svg><b>12</b></td></tr>
            <tr><th><b>7</b></th><td>柱类型</td><td><b>(</b>中柱<b>)</b></td></tr>
            <tr class="blue"><th><b>8</b></th><td>其它箍筋</td><td></td></tr>
            <tr><th><b>9</b></th><td>备注</td><td></td></tr>
            <tr class="dim"><th><b>10</b></th><td class="fold"><button aria-label="展开">+</button>芯柱</td><td></td></tr>
            <tr class="dim"><th><b>15</b></th><td class="fold"><button aria-label="展开">+</button>其它属性</td><td></td></tr>
            <tr class="dim"><th><b>28</b></th><td class="fold"><button aria-label="展开">+</button>锚固搭接</td><td></td></tr>
            <tr class="dim"><th><b>43</b></th><td class="fold"><button aria-label="展开">+</button>显示样式</td><td></td></tr>
          </tbody>
        </table>
      </div>
      <div class="section-box">
        <div class="section-bar">
          <span class="grip"></span>
          <button class="text">布角筋</button><button class="text">布边筋</button><button class="text">特殊布筋</button><button class="text">对齐钢筋</button>
          <span class="more">»</span>
        </div>
        <div class="section-bar info">
          <span class="grip"></span>
          <label for="rebarInfo">钢筋信息</label>
          <span class="combo boxed"><select id="rebarInfo"><option></option></select></span>
        </div>
        <div class="section-view">
          <svg viewBox="1498 697 250 129">
            <path class="grid" d="M1501 734.500h202M1501 755.500h202M1501 776.500h202M1501 798.500h202M1501 819.500h202M1506.500 731v96M1528.500 731v96M1549.500 731v96M1570.500 731v96M1591.500 731v96M1613.500 731v96M1634.500 731v96M1655.500 731v96M1677.500 731v96M1698.500 731v96"/>
            <text x="1585" y="740" class="ghost">500</text>
            <g class="tiny">
              <text x="1646" y="723" fill="#fff">角筋</text><text x="1646" y="731" fill="#fff">箍筋</text>
              <text x="1667" y="722" fill="#0f0">4C16</text><text x="1667" y="730" fill="#0f0">C8@90/180</text>
              <text x="1583" y="746" fill="#0f0">1C16</text><text x="1635" y="798" fill="#fff">425</text>
            </g>
            <path d="M1560.500 830v-79.500h63V830M1623.500 750.500l22-22" fill="none" stroke="#fff"/>
            <path d="M1626 750.500h12M1628 746l7 8M1632.500 750v80" fill="none" stroke="#0f0"/>
            <path d="M1565 830v-72q0-3 3-3h47q3 0 3 3v72M1589 755v75M1565 788h53M1565 826h53M1569 757l14 14M1566 760l14 14M1592 757l16 13M1603 809l15 13M1600 812l13 13" fill="none" stroke="#f00" stroke-width="2"/>
            <path d="M1566 757h3v2h-3zM1614 757h3v2h-3z" fill="#ff0"/>
            <path d="M1590 757h3v2h-3zM1566 790h3v2h-3zM1614 790h3v2h-3zM1566 822h3v2h-3zM1614 822h3v2h-3z" fill="#f0f"/>
            <circle cx="1758" cy="835" r="22" fill="#3fae5c" stroke="#fff" stroke-width="2"/>
          </svg>
        </div>
      </div>
      <svg class="mark-prop" viewBox="0 0 332 130"><ellipse class="mark" cx="166" cy="65" rx="165" ry="64"/></svg>
    </aside>
  </main>
</body>
</html>
```

FILE: styles.css
```css
* {
  box-sizing: border-box;
}
body {
  margin: 0;
  height: 100vh;
  overflow: hidden;
  display: flex;
  flex-direction: column;
  background: #f0f0f0;
  color: #000;
  font: 12px/16px "Open Sans", "Noto Sans CJK SC", sans-serif;
}
.sprite {
  display: none;
}
button, input, select {
  font: inherit;
  color: inherit;
}
a {
  color: inherit;
  text-decoration: none;
}
h2 {
  margin: 0;
  font-weight: normal;
}

/* menu */
.menubar {
  display: flex;
  align-items: center;
  gap: 11px;
  height: 27px;
  margin: -12px 0 0 -13px;
  padding-bottom: 2px;
  white-space: nowrap;
}
.menubar a {
  display: flex;
  align-items: center;
  gap: 4px;
}
.menubar svg {
  width: 16px;
  height: 16px;
}
.account {
  display: flex;
  gap: 8px;
  margin-left: auto;
}

/* toolbars */
.row {
  display: flex;
  gap: 4px;
  height: 28px;
  padding-left: 1px;
}
.row-main {
  height: 30px;
  margin-left: -2px;
  padding: 0;
  gap: 6px;
}
.row-snap {
  height: 33px;
  margin-top: 1px;
}
.band {
  display: flex;
  align-items: center;
  gap: 1px;
  height: 26px;
  padding: 0 1px 0 3px;
  border-radius: 3px;
  background: linear-gradient(#fdfdfd, #f0f0f0);
  white-space: nowrap;
}
.row-main .band {
  padding: 0;
}
.row-snap .band {
  height: 28px;
}
.blank {
  width: 32px;
}
.band button {
  display: flex;
  align-items: center;
  gap: 4px;
  height: 23px;
  padding: 0 2px;
  border: 1px solid transparent;
  background: none;
}
.band button:disabled {
  color: #838383;
}
.band button.on {
  border-color: #3399ff;
  background: #e5eff9;
}
.band svg {
  width: 16px;
  height: 16px;
  flex: none;
}
.band .nav {
  width: 22px;
}
.band .close {
  padding: 0 4px;
}
.arrow {
  width: 6px;
  margin-left: 2px;
  border: 3px solid transparent;
  border-top-color: currentColor;
  border-bottom: 0;
}
.arrow.tight {
  margin-left: -2px;
}
.sep {
  width: 1px;
  height: 16px;
  margin: 0 1px 0 3px;
  background: #b8b8b8;
}
.grip {
  width: 3px;
  height: 15px;
  background: repeating-linear-gradient(#bdbdbd 0 2px, transparent 2px 4px);
}
.combo {
  display: grid;
  align-items: center;
  width: 69px;
  height: 22px;
  margin-right: 2px;
  background: linear-gradient(90deg, #fff 0 calc(100% - 12px), #f6f6f6 0);
}
.combo.short {
  width: 57px;
}
.combo select {
  grid-area: 1 / 1;
  width: 100%;
  height: 22px;
  padding: 0 2px;
  border: 0;
  background: none;
  appearance: none;
}
.combo::after {
  content: "";
  grid-area: 1 / 1;
  justify-self: end;
  margin-right: 3px;
  border: 3px solid transparent;
  border-top-color: #000;
  border-bottom: 0;
  pointer-events: none;
}
.field {
  display: flex;
  align-items: center;
  gap: 2px;
  margin-right: 3px;
  color: #838383;
}
.spin {
  display: grid;
  align-items: center;
  width: 58px;
}
.spin.wide {
  width: 68px;
}
.spin input {
  grid-area: 1 / 1;
  width: 100%;
  height: 23px;
  padding: 0 18px 0 2px;
  border: 1px solid #777;
  background: #f4f4f4;
  text-align: right;
}
.spin::before, .spin::after {
  content: "";
  grid-area: 1 / 1;
  justify-self: end;
  margin: 0 5px 12px 0;
  border: 3px solid transparent;
  border-top: 0;
  border-bottom-color: #555;
  z-index: 1;
}
.spin::after {
  margin: 12px 5px 0 0;
  border-top: 3px solid #555;
  border-bottom: 0;
}
.rotate-check {
  display: flex;
  align-items: center;
  gap: 8px;
  margin-right: 3px;
}
.rotate-check input {
  appearance: none;
  width: 12px;
  height: 12px;
  margin: 0;
  border: 1px solid #9a9a9a;
  background: #f6f6f6;
}

/* layout */
main {
  flex: 1;
  min-height: 0;
  display: flex;
}
.work {
  flex: 1;
  min-width: 0;
  display: flex;
  flex-direction: column;
  padding: 0 3px 0 5px;
}
.work .row {
  flex: none;
}
aside {
  position: relative;
  width: 259px;
  display: flex;
  flex-direction: column;
  padding-top: 1px;
}

/* 3d view */
.canvas {
  position: relative;
  margin-top: -2px;
  background: #000;
}
.scene {
  display: block;
  width: 100%;
}
.axis {
  stroke: #f00;
  shape-rendering: crispEdges;
}
.bubble {
  fill: none;
  stroke: #008a00;
}
.axis-no {
  fill: #e8e8e8;
  font: 16px "Noto Sans", sans-serif;
}
.ucs {
  font: 13px "Liberation Sans", sans-serif;
}
.stirrup {
  fill: none;
  stroke: #9c8c86;
  stroke-width: 3;
}
.hook {
  fill: none;
  stroke: #9c8c86;
  stroke-width: 2;
}
.orbit {
  fill: none;
  stroke: #7c7c7c;
}
.mark {
  fill: none;
  stroke: #ff4a4a;
}
.float-panel {
  position: absolute;
  left: 3px;
  top: 3px;
  width: 180px;
  height: 181px;
  padding: 5px;
  border: 1px solid #a8a8a8;
  border-radius: 6px;
  background: linear-gradient(#2e2e30, #404042 35%, #161718 36%, #0a0a0a);
  display: flex;
  flex-direction: column;
}
.float-panel h2 {
  align-self: flex-start;
  padding: 0 2px;
  font-size: 12px;
  line-height: 14px;
  white-space: nowrap;
  background: #626264;
  box-shadow: 0 0 7px 3px #626264;
}
.checks {
  position: relative;
  flex: 1;
  margin-top: 5px;
  padding: 4px 3px;
  border: 2px solid #b5b5b5;
  outline: 1px solid #555;
  background: #fff;
}
.checks label {
  display: flex;
  align-items: center;
  gap: 4px;
  height: 12px;
  white-space: nowrap;
}
.checks input {
  appearance: none;
  width: 11px;
  height: 11px;
  margin: 0;
  border: 1px solid #8e8f8f;
  background: #eceef4;
}
.checks input::before {
  content: "";
  display: block;
  width: 3px;
  height: 6px;
  margin: 0 0 0 3px;
  border: solid #3a4fa0;
  border-width: 0 2px 2px 0;
  transform: rotate(40deg);
}

/* rebar sheet */
.dock {
  flex: 1;
  min-height: 0;
  display: flex;
}
.dock-handle {
  width: 13px;
  padding-top: 12px;
  background: radial-gradient(circle at 2px 2px, #b4b4b4 1px, transparent 2px) 2px 12px / 5px 5px;
}
.dock-handle button {
  display: block;
  width: 10px;
  height: 10px;
  margin: -12px 0 0 1px;
  padding: 0;
  border: 0;
  background: #f0f0f0;
}
.dock-handle svg {
  display: block;
}
.dock-body {
  flex: 1;
  min-width: 0;
  display: flex;
  flex-direction: column;
}
.dock-bar {
  height: 26px;
  padding: 0;
  border-radius: 0;
}
.total {
  margin-left: 3px;
}
.sheet {
  position: relative;
  flex: 1;
  padding: 1px 0 0 1px;
  border-top: 1px solid #a0a0a0;
  background: #fff;
}
table {
  table-layout: fixed;
  border-spacing: 0;
  font-size: 12px;
  line-height: 12px;
}
th, td {
  border: solid #bbb;
  border-width: 0 1px 1px 0;
  padding: 0;
  font-weight: normal;
  white-space: nowrap;
}
th {
  background: linear-gradient(#fff, #efefef);
}
th.cur {
  background: linear-gradient(#f8d493, #efbd62);
  color: #600050;
}
table b {
  font: 10px "DejaVu Sans Mono", monospace;
  line-height: 12px;
}
.rebar {
  width: 1279px;
}
.rebar col { width: 71px; }
.rebar col:nth-child(1) { width: 33px; }
.rebar col:nth-child(2) { width: 73px; }
.rebar col:nth-child(3) { width: 56px; }
.rebar col:nth-child(4) { width: 36px; }
.rebar col:nth-child(5) { width: 33px; }
.rebar col:nth-child(6) { width: 201px; }
.rebar col:nth-child(7) { width: 166px; }
.rebar col:nth-child(8) { width: 156px; }
.rebar col:nth-child(9) { width: 61px; }
.rebar col:nth-child(10) { width: 38px; }
.rebar col:nth-child(11) { width: 39px; }
.rebar col:nth-child(12) { width: 49px; }
.rebar col:nth-child(13) { width: 61px; }
.rebar col:nth-child(14) { width: 61px; }
.rebar col:nth-child(16) { width: 74px; }
.rebar thead tr, .empty {
  height: 19px;
}
.tall { height: 41px; }
.mid { height: 34px; }
.low { height: 29px; }
.rebar td {
  padding-left: 1px;
  background: #ccffd9;
}
.rebar tbody td:nth-child(2) {
  border-right-color: #000;
}
.rebar tbody .cur {
  background: #ffd38b;
}
.rebar .focus {
  background: #b4f0de;
}
.rebar .empty td {
  background: #fff;
}
.rebar .grade, .rebar .shape {
  padding: 0;
}
.grade svg {
  display: block;
  width: 10px;
  height: 10px;
  margin: auto;
}
.shape svg {
  display: block;
  width: 200px;
}
.shape path {
  fill: none;
  stroke: #000;
  stroke-width: 2;
}
.shape text {
  font: 10px "DejaVu Sans Mono", monospace;
}
.shape .red {
  fill: #f00;
}
.mark-table {
  position: absolute;
  left: 25px;
  top: 13px;
  width: 954px;
  height: 106px;
  pointer-events: none;
}

/* property editor */
.prop-title {
  display: flex;
  align-items: center;
  gap: 11px;
  height: 14px;
  padding-right: 1px;
  border: solid #777;
  border-width: 1px 0;
}
.prop-title h2 {
  flex: 1;
  padding-bottom: 2px;
  font-size: 13px;
  line-height: 12px;
}
.prop-title button {
  display: flex;
  padding: 0;
  border: 0;
  background: none;
}
.prop-title svg {
  width: 8px;
  height: 9px;
}
.prop-box {
  flex: 1;
  margin-top: 1px;
  padding-top: 1px;
  border: 1px solid #a0a0a0;
  border-width: 1px 0 1px 2px;
  background: #fff;
}
.props {
  width: 100%;
}
.props tr {
  height: 19px;
}
.props thead tr {
  height: 24px;
}
.props th:first-child {
  width: 20px;
}
.props th:nth-child(2) {
  width: 121px;
}
.props td {
  padding-left: 2px;
  color: #808080;
}
.props td:nth-child(2) {
  padding-left: 20px;
  color: #000;
}
.props .blue td:nth-child(2) {
  color: #0000f0;
}
.props .dim td:nth-child(2) {
  color: #808080;
}
.props .sel th {
  background: #ffd38b;
  color: #600050;
}
.props .sel td {
  background: #e0efff;
}
.props .sel td:nth-child(2) {
  background: #3399ff;
  color: #fff;
}
.props td svg {
  width: 10px;
  height: 10px;
  margin: 0 1px 0 2px;
  color: #000;
  vertical-align: -1px;
}
.props td.fold:nth-child(2) {
  padding-left: 3px;
}
.fold button {
  width: 12px;
  height: 12px;
  margin-right: 5px;
  padding: 0;
  border: 1px solid #999;
  background: #f4f4f4;
  color: #000;
  line-height: 10px;
  vertical-align: middle;
}
.mark-prop {
  position: absolute;
  left: -72px;
  top: 88px;
  width: 332px;
  height: 130px;
  pointer-events: none;
}

/* section preview */
.section-box {
  flex: none;
  height: 192px;
  margin-top: 5px;
  padding: 3px 0 0 4px;
  border: solid #8a8a92;
  border-width: 1px 0 0 1px;
  display: flex;
  flex-direction: column;
}
.section-bar {
  display: flex;
  align-items: center;
  gap: 10px;
  height: 28px;
  padding-left: 3px;
  background: linear-gradient(#fdfdfd, #f0f0f0);
}
.section-bar .grip {
  margin-right: -4px;
}
.section-bar .text {
  padding: 0;
  border: 0;
  background: none;
  white-space: nowrap;
}
.more {
  align-self: flex-start;
  margin-left: auto;
  padding-right: 3px;
  font-weight: bold;
}
.section-bar.info {
  gap: 2px;
  color: #838383;
}
.info .grip {
  margin-right: 4px;
}
.combo.boxed {
  width: 133px;
  height: 23px;
  border: 1px solid #777;
  background: #f4f4f4;
}
.section-view {
  flex: 1;
  min-height: 0;
  overflow: hidden;
  border: 2px solid #f00;
  border-bottom: 0;
  background: #000;
}
.section-view svg {
  display: block;
  width: 100%;
}
.grid {
  stroke: #3c3c3c;
  stroke-dasharray: 9 3 3 3;
}
.ghost {
  fill: #555;
  font: 11px "Open Sans", sans-serif;
}
.tiny {
  font: 8px "DejaVu Sans Mono", "Noto Sans CJK SC", monospace;
}
```
